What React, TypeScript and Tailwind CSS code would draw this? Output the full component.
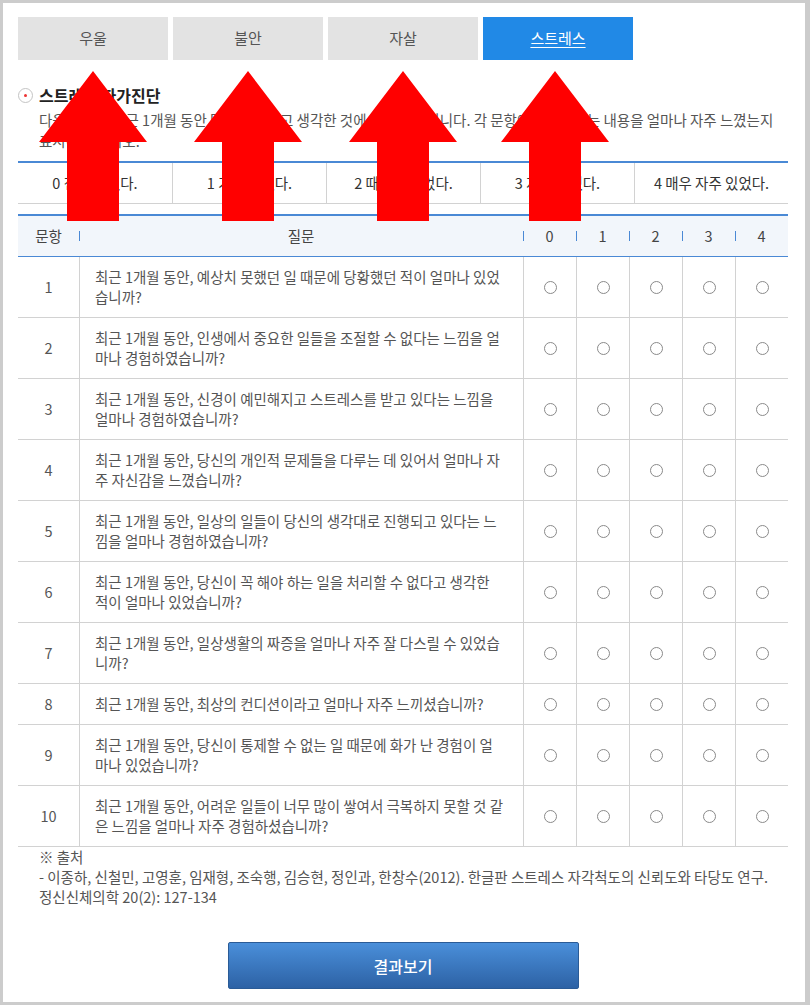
const TABS = ["우울", "불안", "자살", "스트레스"];
const SCALE = ["0 전혀 없었다.", "1 거의 없었다.", "2 때때로 있었다.", "3 자주 있었다.", "4 매우 자주 있었다."];

// line breaks kept as in the original page
const QUESTIONS: string[][] = [
  ["최근 1개월 동안, 예상치 못했던 일 때문에 당황했던 적이 얼마나 있었", "습니까?"],
  ["최근 1개월 동안, 인생에서 중요한 일들을 조절할 수 없다는 느낌을 얼", "마나 경험하였습니까?"],
  ["최근 1개월 동안, 신경이 예민해지고 스트레스를 받고 있다는 느낌을", "얼마나 경험하였습니까?"],
  ["최근 1개월 동안, 당신의 개인적 문제들을 다루는 데 있어서 얼마나 자", "주 자신감을 느꼈습니까?"],
  ["최근 1개월 동안, 일상의 일들이 당신의 생각대로 진행되고 있다는 느", "낌을 얼마나 경험하였습니까?"],
  ["최근 1개월 동안, 당신이 꼭 해야 하는 일을 처리할 수 없다고 생각한", "적이 얼마나 있었습니까?"],
  ["최근 1개월 동안, 일상생활의 짜증을 얼마나 자주 잘 다스릴 수 있었습", "니까?"],
  ["최근 1개월 동안, 최상의 컨디션이라고 얼마나 자주 느끼셨습니까?"],
  ["최근 1개월 동안, 당신이 통제할 수 없는 일 때문에 화가 난 경험이 얼", "마나 있었습니까?"],
  ["최근 1개월 동안, 어려운 일들이 너무 많이 쌓여서 극복하지 못할 것 같", "은 느낌을 얼마나 자주 경험하셨습니까?"],
];

const ARROWS = [93, 248, 403, 555];

function arrowPoints(cx: number) {
  return `${cx},71 ${cx + 54},142 ${cx + 26},142 ${cx + 26},221 ${cx - 26},221 ${cx - 26},142 ${cx - 54},142`;
}

const tick =
  "relative before:absolute before:left-0 before:top-1/2 before:h-[10px] before:w-px before:-translate-y-1/2 before:bg-[#4a89d5] before:content-['']";

export default function App() {
  return (
    <div className="relative h-[1005px] w-[810px] font-['Noto_Sans_CJK_KR','Malgun_Gothic',sans-serif]">
      <div className="h-full border-[3px] border-r-[5px] border-[#cccccc] bg-white pl-[15px] pr-[14px] pt-[14px]">
        {/* tabs */}
        <div className="flex gap-[5px]">
          {TABS.map((t, i) => (
            <div
              key={t}
              className={
                i === 3
                  ? "flex h-[43px] w-[150px] items-center justify-center bg-[#2189e6] text-[15px] text-white underline underline-offset-[3px]"
                  : "flex h-[43px] w-[150px] items-center justify-center bg-[#e3e3e3] text-[15px] text-[#555]"
              }
            >
              {t}
            </div>
          ))}
        </div>

        {/* title */}
        <div className="mt-[25px] flex h-[20px] items-center gap-[6px]">
          <span className="flex h-[15px] w-[15px] items-center justify-center rounded-full border border-[#c4c4c4]">
            <span className="h-[3px] w-[3px] rounded-full bg-[#e33]" />
          </span>
          <h2 className="text-[16px] font-bold leading-[20px] text-[#222]">스트레스 자가진단</h2>
        </div>
        <p className="mt-[4px] pl-[21px] text-[14.5px] leading-[21px] whitespace-nowrap text-[#555]">
          다음의 경우 최근 1개월 동안 당신이 느끼고 생각한 것에 대한 질문입니다. 각 문항에서 해당하는 내용을 얼마나 자주 느꼈는지
          <br />
          표시해 주십시오.
        </p>

        {/* scale */}
        <div className="mt-[10px] grid w-[770px] grid-cols-5 border-t-2 border-b border-t-[#4a89d5] border-b-[#d2d2d2]">
          {SCALE.map((s, i) => (
            <div
              key={s}
              className={`flex h-[40px] items-center justify-center text-[14.5px] text-[#333] ${i > 0 ? "border-l border-[#d2d2d2]" : ""}`}
            >
              {s}
            </div>
          ))}
        </div>

        {/* questions */}
        <div className="mt-[10px] w-[770px] border-t-2 border-[#4a89d5]">
          <div className="grid h-[41px] grid-cols-[61px_444px_repeat(5,53px)] border-b border-[#4a89d5] bg-[#f2f6fb] text-[14.5px] text-[#444]">
            <div className="flex items-center justify-center">문항</div>
            <div className={`flex items-center justify-center ${tick}`}>질문</div>
            {[0, 1, 2, 3, 4].map((n) => (
              <div key={n} className={`flex items-center justify-center ${tick}`}>
                {n}
              </div>
            ))}
          </div>
          {QUESTIONS.map((q, i) => (
            <div
              key={i}
              className={`grid grid-cols-[61px_444px_repeat(5,53px)] border-b border-[#d2d2d2] ${q.length > 1 ? "h-[61px]" : "h-[41px]"}`}
            >
              <div className="flex items-center justify-center text-[14.5px] text-[#555]">{i + 1}</div>
              <div className="flex flex-col justify-center border-l border-[#d2d2d2] pl-[15px] text-[14.5px] leading-[20px] whitespace-nowrap text-[#555]">
                {q.map((line) => (
                  <span key={line}>{line}</span>
                ))}
              </div>
              {[0, 1, 2, 3, 4].map((n) => (
                <div key={n} className="flex items-center justify-center border-l border-[#d2d2d2]">
                  <input
                    type="radio"
                    name={`q${i}`}
                    className="h-[13px] w-[13px] appearance-none rounded-full border border-[#8a8a8a] bg-white"
                  />
                </div>
              ))}
            </div>
          ))}
        </div>

        {/* source */}
        <div className="pl-[21px] text-[14.5px] leading-[20px] whitespace-nowrap text-[#555]">
          <p>※ 출처</p>
          <p>- 이종하, 신철민, 고영훈, 임재형, 조숙행, 김승현, 정인과, 한창수(2012). 한글판 스트레스 자각척도의 신뢰도와 타당도 연구.</p>
          <p>정신신체의학 20(2): 127-134</p>
        </div>

        <div className="mt-[35px] flex w-[770px] justify-center">
          <button className="h-[47px] w-[351px] rounded-[2px] border border-[#2a5b96] bg-gradient-to-b from-[#4a8fda] to-[#2d62a5] text-[16px] font-medium text-white">
            결과보기
          </button>
        </div>
      </div>

      {/* red annotation arrows */}
      <svg className="pointer-events-none absolute left-0 top-0" width="810" height="230" viewBox="0 0 810 230">
        {ARROWS.map((cx) => (
          <polygon key={cx} points={arrowPoints(cx)} fill="#ff0000" />
        ))}
      </svg>
    </div>
  );
}
